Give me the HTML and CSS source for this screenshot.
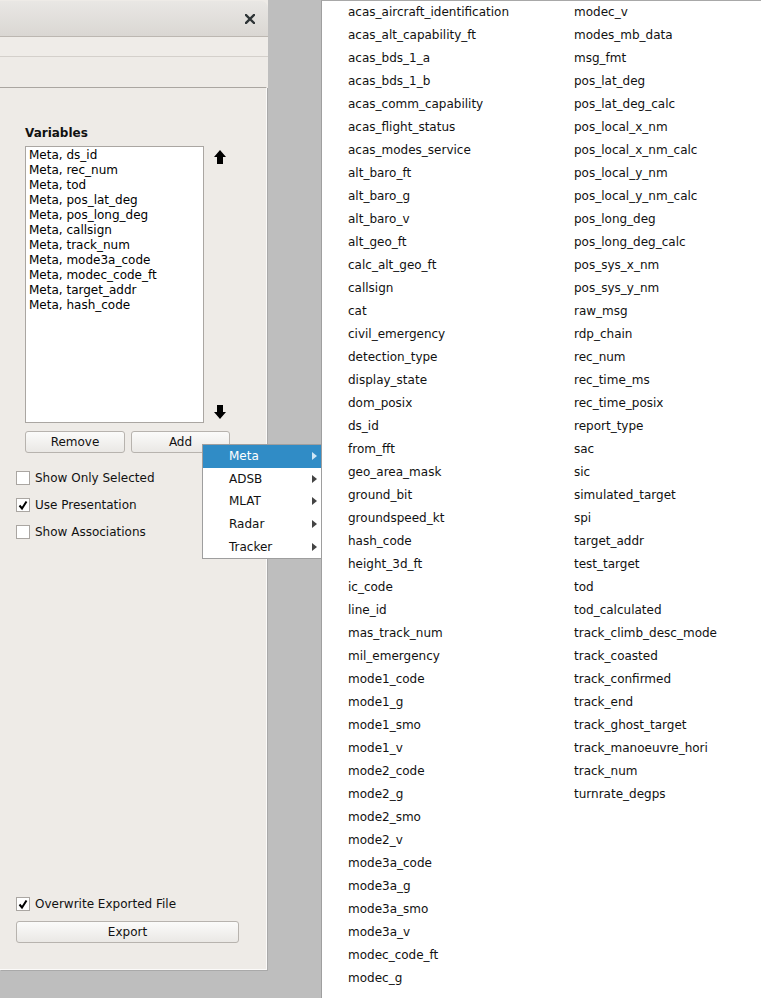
FILE: index.html
```html
<!DOCTYPE html>
<html>
<head>
<meta charset="utf-8">
<link rel="stylesheet" href="styles.css">
</head>
<body>
<div class="window">
  <div class="titlebar">
    <svg class="close" width="10" height="10" viewBox="0 0 10 10"><path d="M1 1 L9 9 M9 1 L1 9" stroke="#2e3436" stroke-width="2.4" stroke-linecap="square"/></svg>
  </div>
  <div class="band1"></div>
  <div class="band2"></div>
  <div class="frame">
    <div class="group">
      <div class="label">Variables</div>
      <div class="listrow">
        <div class="listbox">
          <div>Meta, ds_id</div>
          <div>Meta, rec_num</div>
          <div>Meta, tod</div>
          <div>Meta, pos_lat_deg</div>
          <div>Meta, pos_long_deg</div>
          <div>Meta, callsign</div>
          <div>Meta, track_num</div>
          <div>Meta, mode3a_code</div>
          <div>Meta, modec_code_ft</div>
          <div>Meta, target_addr</div>
          <div>Meta, hash_code</div>
        </div>
        <div class="arrows">
          <svg width="12" height="14" viewBox="0 0 12 14"><path d="M6 0 L12 7 L9 7 L9 14 L3 14 L3 7 L0 7 Z" fill="#000"/></svg>
          <svg width="12" height="14" viewBox="0 0 12 14"><path d="M6 14 L12 7 L9 7 L9 0 L3 0 L3 7 L0 7 Z" fill="#000"/></svg>
        </div>
      </div>
      <div class="btnrow">
        <div class="btn remove">Remove</div>
        <div class="btn add">Add</div>
      </div>
    </div>
    <div class="checks">
      <div class="check"><span class="box"></span>Show Only Selected</div>
      <div class="check"><span class="box"><svg width="12" height="12" viewBox="0 0 12 12"><path d="M2.5 6.5 L5 9.5 L9.5 2.5" stroke="#000" stroke-width="2" fill="none"/></svg></span>Use Presentation</div>
      <div class="check"><span class="box"></span>Show Associations</div>
    </div>
    <div class="bottom">
      <div class="check"><span class="box"><svg width="12" height="12" viewBox="0 0 12 12"><path d="M2.5 6.5 L5 9.5 L9.5 2.5" stroke="#000" stroke-width="2" fill="none"/></svg></span>Overwrite Exported File</div>
      <div class="btn export">Export</div>
    </div>
  </div>
</div>

<div class="menu">
  <div class="mi active"><span>Meta</span><i class="tri"></i></div>
  <div class="mi"><span>ADSB</span><i class="tri"></i></div>
  <div class="mi"><span>MLAT</span><i class="tri"></i></div>
  <div class="mi"><span>Radar</span><i class="tri"></i></div>
  <div class="mi"><span>Tracker</span><i class="tri"></i></div>
</div>

<div class="panel">
  <div class="col c1">
    <div>acas_aircraft_identification</div>
    <div>acas_alt_capability_ft</div>
    <div>acas_bds_1_a</div>
    <div>acas_bds_1_b</div>
    <div>acas_comm_capability</div>
    <div>acas_flight_status</div>
    <div>acas_modes_service</div>
    <div>alt_baro_ft</div>
    <div>alt_baro_g</div>
    <div>alt_baro_v</div>
    <div>alt_geo_ft</div>
    <div>calc_alt_geo_ft</div>
    <div>callsign</div>
    <div>cat</div>
    <div>civil_emergency</div>
    <div>detection_type</div>
    <div>display_state</div>
    <div>dom_posix</div>
    <div>ds_id</div>
    <div>from_fft</div>
    <div>geo_area_mask</div>
    <div>ground_bit</div>
    <div>groundspeed_kt</div>
    <div>hash_code</div>
    <div>height_3d_ft</div>
    <div>ic_code</div>
    <div>line_id</div>
    <div>mas_track_num</div>
    <div>mil_emergency</div>
    <div>mode1_code</div>
    <div>mode1_g</div>
    <div>mode1_smo</div>
    <div>mode1_v</div>
    <div>mode2_code</div>
    <div>mode2_g</div>
    <div>mode2_smo</div>
    <div>mode2_v</div>
    <div>mode3a_code</div>
    <div>mode3a_g</div>
    <div>mode3a_smo</div>
    <div>mode3a_v</div>
    <div>modec_code_ft</div>
    <div>modec_g</div>
  </div>
  <div class="col c2">
    <div>modec_v</div>
    <div>modes_mb_data</div>
    <div>msg_fmt</div>
    <div>pos_lat_deg</div>
    <div>pos_lat_deg_calc</div>
    <div>pos_local_x_nm</div>
    <div>pos_local_x_nm_calc</div>
    <div>pos_local_y_nm</div>
    <div>pos_local_y_nm_calc</div>
    <div>pos_long_deg</div>
    <div>pos_long_deg_calc</div>
    <div>pos_sys_x_nm</div>
    <div>pos_sys_y_nm</div>
    <div>raw_msg</div>
    <div>rdp_chain</div>
    <div>rec_num</div>
    <div>rec_time_ms</div>
    <div>rec_time_posix</div>
    <div>report_type</div>
    <div>sac</div>
    <div>sic</div>
    <div>simulated_target</div>
    <div>spi</div>
    <div>target_addr</div>
    <div>test_target</div>
    <div>tod</div>
    <div>tod_calculated</div>
    <div>track_climb_desc_mode</div>
    <div>track_coasted</div>
    <div>track_confirmed</div>
    <div>track_end</div>
    <div>track_ghost_target</div>
    <div>track_manoeuvre_hori</div>
    <div>track_num</div>
    <div>turnrate_degps</div>
  </div>
</div>
</body>
</html>
```

FILE: styles.css
```css
html, body {
  margin: 0;
  padding: 0;
}
body {
  width: 761px;
  height: 998px;
  overflow: hidden;
  background: #bebebe;
  display: flex;
  align-items: flex-start;
  font-family: "DejaVu Sans", sans-serif;
  font-size: 12px;
  color: #111;
  position: relative;
}

.window {
  width: 268px;
  height: 970px;
  display: flex;
  flex-direction: column;
  background: #eeebe7;
}

.titlebar {
  height: 36px;
  margin-top: 1px;
  background: linear-gradient(#e9e7e4, #dad7d3);
  border-bottom: 1px solid #bcb7b1;
  border-top-right-radius: 7px;
  display: flex;
  align-items: center;
  justify-content: flex-end;
  padding-right: 13px;
  box-sizing: border-box;
}
.close { display: block; }

.band1 {
  height: 19px;
  background: #efece8;
  border-bottom: 1px solid #d4d0cb;
}
.band2 {
  height: 30px;
  background: #eeebe7;
}

.frame {
  flex: 1;
  display: flex;
  flex-direction: column;
  border-top: 1px solid #aaa6a1;
  border-right: 1px solid #fbfaf9;
  border-bottom: 1px solid #fbfaf9;
  box-shadow: 1px 1px 0 #a9a9a9;
  padding-left: 16px;
  margin-right: 1px;
}

.group {
  padding-left: 9px;
  padding-top: 38px;
}
.label {
  font-weight: bold;
  line-height: 14px;
  height: 14px;
  color: #111;
}
.listrow {
  display: flex;
  margin-top: 6px;
}
.listbox {
  background: #fff;
  border: 1px solid #aaa6a2;
  padding: 1px 0 0 3px;
  box-sizing: content-box;
  width: 174px;
  height: 274px;
  color: #000;
  white-space: nowrap;
}
.listbox div {
  line-height: 15px;
  height: 15px;
}
.arrows {
  display: flex;
  flex-direction: column;
  justify-content: space-between;
  padding: 4px 0 4px 10px;
}
.arrows svg { display: block; }

.btnrow {
  display: flex;
  gap: 6px;
  margin-top: 8px;
}
.btn {
  height: 20px;
  line-height: 20px;
  text-align: center;
  border: 1px solid #b7b3ae;
  border-radius: 3px;
  background: linear-gradient(#fbfbfa, #eae8e5);
  color: #111;
}
.remove { width: 98px; }
.add { width: 97px; }

.checks {
  margin-top: 18px;
  display: flex;
  flex-direction: column;
  gap: 13px;
}
.check {
  display: flex;
  align-items: center;
  height: 14px;
  line-height: 14px;
  white-space: nowrap;
}
.box {
  flex: none;
  width: 12px;
  height: 12px;
  border: 1px solid #aaa6a2;
  background: #fff;
  margin-right: 5px;
  display: flex;
  align-items: center;
  justify-content: center;
}
.box svg { display: block; }

.bottom {
  margin-top: auto;
  margin-bottom: 26px;
  display: flex;
  flex-direction: column;
  gap: 10px;
}
.export { width: 221px; }

.menu {
  position: absolute;
  left: 202px;
  top: 444px;
  width: 118px;
  background: #fff;
  border: 1px solid #9e9e9e;
  z-index: 5;
}
.mi {
  height: 22.6px;
  display: flex;
  align-items: center;
  padding-left: 26px;
  padding-right: 4px;
  color: #111;
}
.mi span { flex: 1; }
.mi.active {
  background: #308cc6;
  color: #fff;
}
.tri {
  width: 0;
  height: 0;
  border-top: 4px solid transparent;
  border-bottom: 4px solid transparent;
  border-left: 5px solid #444;
}
.mi.active .tri { border-left-color: #cfe6f5; }

.panel {
  margin-left: auto;
  width: 440px;
  height: 998px;
  background: #fff;
  border-left: 1px solid #9f9f9f;
  border-top: 1px solid #a8a8a8;
  display: flex;
  padding-left: 26px;
  box-sizing: border-box;
  color: #111;
}
.col {
  display: flex;
  flex-direction: column;
}
.c1 { width: 226px; flex: none; }
.col div {
  height: 23px;
  line-height: 23px;
  white-space: nowrap;
}
```
